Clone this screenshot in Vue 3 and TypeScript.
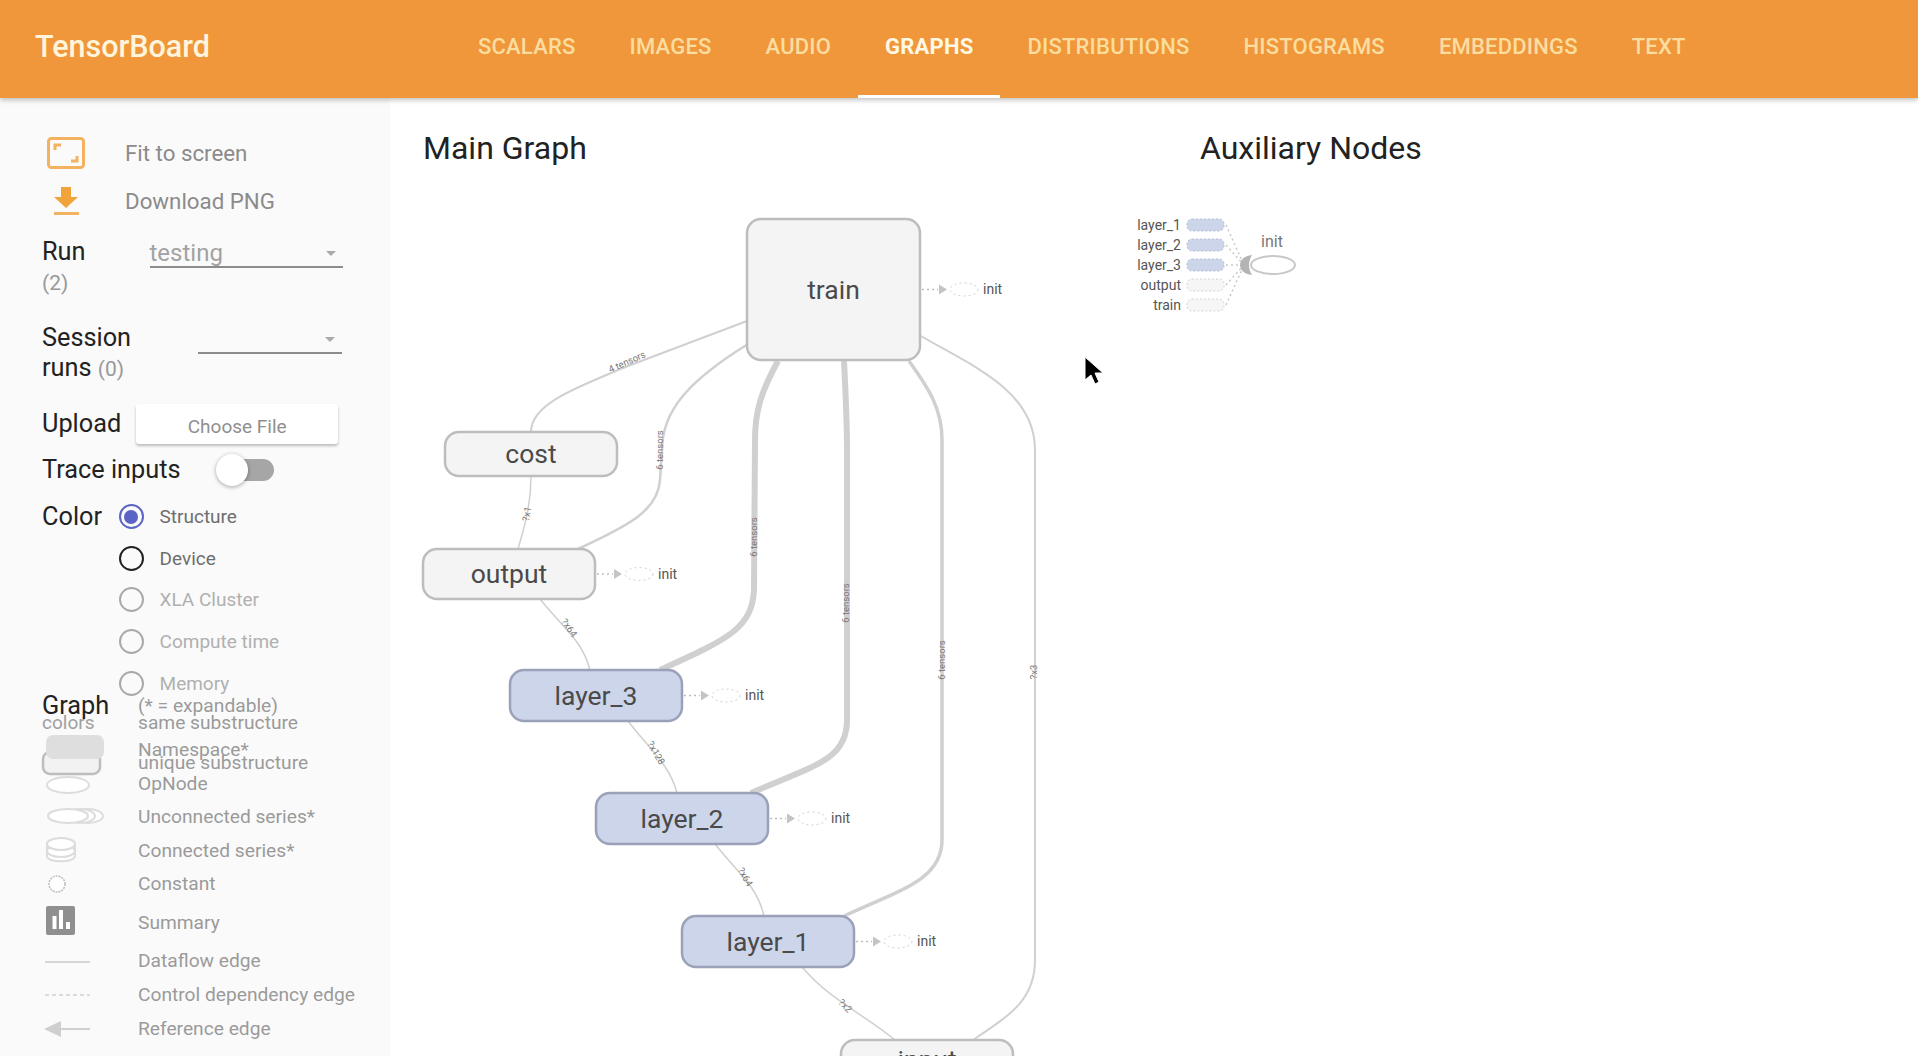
<template>
  <div class="page">
    <header class="toolbar">
      <div class="brand">TensorBoard</div>
      <nav class="tabs">
        <a v-for="tab in tabs" :key="tab" :class="['tab', { active: tab === 'GRAPHS' }]">{{ tab }}</a>
      </nav>
    </header>

    <div class="body">
      <aside class="sidebar">
        <div class="action">
          <svg class="action-icon" width="38" height="32" viewBox="0 0 38 32">
            <rect x="1.5" y="1.5" width="35" height="29" rx="3" fill="none" stroke="#f2b25f" stroke-width="3" />
            <path d="M8 13V8h6M30 19v5h-6" fill="none" stroke="#f2b25f" stroke-width="3" />
          </svg>
          <span>Fit to screen</span>
        </div>
        <div class="action download">
          <svg class="action-icon" width="38" height="32" viewBox="0 0 38 32">
            <path d="M14 2h10v10h7L19 23 7 12h7z" fill="#f2a43c" />
            <rect x="7" y="27" width="25" height="3" fill="#f2b25f" />
          </svg>
          <span>Download PNG</span>
        </div>

        <div class="field run">
          <div class="field-label">Run<br /><small>(2)</small></div>
          <div class="select run-select"><span>testing</span><i class="caret"></i></div>
        </div>

        <div class="field session">
          <div class="field-label">Session<br />runs <small>(0)</small></div>
          <div class="select session-select"><i class="caret"></i></div>
        </div>

        <div class="field upload">
          <div class="field-label">Upload</div>
          <button class="choose">Choose File</button>
        </div>

        <div class="field trace">
          <div class="field-label">Trace inputs</div>
          <div class="toggle"><i class="knob"></i></div>
        </div>

        <div class="field color">
          <div class="field-label">Color</div>
          <div class="radios">
            <div v-for="opt in colorOptions" :key="opt.label" :class="['radio', opt.state]">
              <i class="dot"></i><span>{{ opt.label }}</span>
            </div>
          </div>
        </div>

        <div class="legend">
          <div class="legend-keys">
            <div class="graph-title">Graph</div>
            <div class="graph-sub">colors</div>
            <svg class="legend-svg" width="96" height="320" viewBox="0 730 96 320">
              <rect x="1" y="752" width="57" height="22" rx="7" fill="#f2f2f2" stroke="#bdbdbd" stroke-width="2.5" />
              <rect x="4" y="735" width="58" height="24" rx="7" fill="#dedede" />
              <ellipse cx="26" cy="785" rx="21" ry="8" fill="#fff" stroke="#dcdcdc" stroke-width="2" />
              <ellipse cx="46" cy="816" rx="15" ry="7" fill="#fff" stroke="#dcdcdc" stroke-width="2" />
              <ellipse cx="38" cy="816" rx="15" ry="7" fill="#fff" stroke="#dcdcdc" stroke-width="2" />
              <ellipse cx="26" cy="816" rx="20" ry="7" fill="#fff" stroke="#dcdcdc" stroke-width="2" />
              <path d="M5 843v13c0 7 28 7 28 0v-13" fill="#fff" stroke="#dcdcdc" stroke-width="2" />
              <ellipse cx="19" cy="851" rx="14" ry="6" fill="#fff" stroke="#dcdcdc" stroke-width="2" />
              <ellipse cx="19" cy="844" rx="14" ry="6" fill="#fff" stroke="#dcdcdc" stroke-width="2" />
              <circle cx="15" cy="884" r="8" fill="#fff" stroke="#bbb" stroke-width="1.5" stroke-dasharray="2 1" />
              <rect x="4" y="906" width="29" height="29" rx="2" fill="#8f8f8f" />
              <path d="M10.500 916h4v13h-4zM17 910h4v19h-4zM24 922h4v7h-4z" fill="#fff" />
              <path d="M3 962h45" stroke="#d6d6d6" stroke-width="2" />
              <path d="M3 995h45" stroke="#cfcfcf" stroke-width="1.500" stroke-dasharray="4 3" />
              <path d="M16 1029h32" stroke="#cfcfcf" stroke-width="2" />
              <path d="M2 1029l17-8v16z" fill="#cfcfcf" />
            </svg>
          </div>
          <div class="legend-labels">
            <div v-for="row in legendRows" :key="row.label" class="legend-label" :style="{ height: row.h + 'px' }">
              {{ row.label }}
            </div>
          </div>
        </div>
      </aside>

      <main class="main">
        <div class="headings">
          <h2 class="main-graph">Main Graph</h2>
          <h2>Auxiliary Nodes</h2>
        </div>

        <!-- graph canvas, drawn in page coordinates -->
        <svg class="canvas" width="1528" height="958" viewBox="390 98 1528 958">
          <g fill="none" stroke="#d0d0d0" stroke-linecap="butt">
            <path v-for="edge in edges" :key="edge.d" :d="edge.d" :stroke-width="edge.w" />
          </g>

          <g v-for="label in edgeLabels" :key="label.text + label.x" :transform="`translate(${label.x} ${label.y}) rotate(${label.r})`">
            <text class="edge-label" text-anchor="middle" dy="3">{{ label.text }}</text>
          </g>

          <g v-for="node in nodes" :key="node.name">
            <rect
              :x="node.x"
              :y="node.y"
              :width="node.w"
              :height="node.h"
              rx="14"
              :fill="node.blue ? '#ccd5ea' : '#f4f4f4'"
              :stroke="node.blue ? '#9aa1b8' : '#bdbdbd'"
              stroke-width="2.500"
            />
            <text class="node-label" :x="node.x + node.w / 2" :y="node.y + node.h / 2 + 9" text-anchor="middle">{{ node.name }}</text>
            <g v-if="node.stub" :transform="`translate(${node.x + node.w} ${node.y + node.h / 2})`">
              <path d="M2 0h16" stroke="#bdbdbd" stroke-width="1.500" stroke-dasharray="2 3" />
              <path d="M19-5l8 5-8 5z" fill="#c4c4c4" />
              <ellipse cx="44" cy="0" rx="14" ry="6.500" fill="#fff" stroke="#cfcfcf" stroke-dasharray="2 3" />
              <text class="stub-label" x="63" y="4.500">init</text>
            </g>
          </g>

          <!-- auxiliary init node -->
          <g>
            <g v-for="(aux, i) in auxNodes" :key="aux.name">
              <text class="aux-label" x="1181" :y="225 + i * 20 + 5" text-anchor="end">{{ aux.name }}</text>
              <rect
                x="1187"
                :y="219 + i * 20"
                width="37"
                height="12"
                rx="5"
                :fill="aux.blue ? '#ccd5ea' : '#f6f6f6'"
                :stroke="aux.blue ? '#b5bdd4' : '#d4d4d4'"
                stroke-dasharray="2 2"
              />
              <path :d="`M1226 ${225 + i * 20}L1244 265`" stroke="#c8c8c8" stroke-width="1.500" stroke-dasharray="2 3" />
            </g>
            <ellipse cx="1273" cy="265" rx="22" ry="9" fill="#fff" stroke="#c8c8c8" stroke-width="2" />
            <path d="M1252 255C1244 256 1240 260 1240 265C1240 270 1244 274 1252 275C1250 272 1249 268 1249 265C1249 262 1250 258 1252 255z" fill="#b4b4b4" />
            <text class="aux-init" x="1272" y="247" text-anchor="middle">init</text>
          </g>

          <!-- mouse pointer caught in the capture -->
          <path d="M1085 357v23l6-5 4 9 4-2-4-9h8z" fill="#000" stroke="#fff" stroke-width="1" />
        </svg>
      </main>
    </div>
  </div>
</template>

<script setup lang="ts">
interface GraphNode {
  name: string
  x: number
  y: number
  w: number
  h: number
  blue?: boolean
  stub?: boolean
}

const tabs = ['SCALARS', 'IMAGES', 'AUDIO', 'GRAPHS', 'DISTRIBUTIONS', 'HISTOGRAMS', 'EMBEDDINGS', 'TEXT']

const colorOptions = [
  { label: 'Structure', state: 'selected' },
  { label: 'Device', state: 'focused' },
  { label: 'XLA Cluster', state: '' },
  { label: 'Compute time', state: '' },
  { label: 'Memory', state: '' },
]

// row heights follow the reference, which squeezes the first rows together
const legendRows = [
  { label: '(* = expandable)', h: 17 },
  { label: 'same substructure', h: 27 },
  { label: 'Namespace*', h: 13 },
  { label: 'unique substructure', h: 21 },
  { label: 'OpNode', h: 33 },
  { label: 'Unconnected series*', h: 34 },
  { label: 'Connected series*', h: 33 },
  { label: 'Constant', h: 39 },
  { label: 'Summary', h: 38 },
  { label: 'Dataflow edge', h: 34 },
  { label: 'Control dependency edge', h: 34 },
  { label: 'Reference edge', h: 34 },
]

const nodes: GraphNode[] = [
  { name: 'train', x: 747, y: 219, w: 173, h: 141, stub: true },
  { name: 'cost', x: 445, y: 432, w: 172, h: 44 },
  { name: 'output', x: 423, y: 549, w: 172, h: 50, stub: true },
  { name: 'layer_3', x: 510, y: 670, w: 172, h: 51, blue: true, stub: true },
  { name: 'layer_2', x: 596, y: 793, w: 172, h: 51, blue: true, stub: true },
  { name: 'layer_1', x: 682, y: 916, w: 172, h: 51, blue: true, stub: true },
  { name: 'input', x: 841, y: 1040, w: 172, h: 40 },
]

const edges = [
  { d: 'M747 321L628 366C570 390 531 405 531 432', w: 2 },
  { d: 'M748 344C690 380 662 410 662 450L660 480C658 510 630 525 578 549', w: 2.5 },
  { d: 'M778 361C762 390 755 410 755 440L754 590C752 630 725 640 660 670', w: 6 },
  { d: 'M844 361C846 400 847 420 847 450L847 720C847 760 815 765 751 793', w: 6 },
  { d: 'M909 361C930 390 942 410 942 440L942 840C942 880 900 890 844 916', w: 3.5 },
  { d: 'M921 336C970 365 1035 390 1035 450L1035 960C1035 1000 1010 1015 973 1040', w: 2 },
  { d: 'M531 476C531 505 525 525 518 549', w: 1.5 },
  { d: 'M540 599C565 630 582 640 590 670', w: 1.5 },
  { d: 'M628 721C650 750 670 765 677 793', w: 1.5 },
  { d: 'M715 844C735 870 757 885 764 916', w: 1.5 },
  { d: 'M802 967C830 1000 865 1015 895 1040', w: 1.5 },
]

const edgeLabels = [
  { text: '4 tensors', x: 627, y: 362, r: -24 },
  { text: '6 tensors', x: 660, y: 450, r: -90 },
  { text: '6 tensors', x: 754, y: 537, r: -90 },
  { text: '6 tensors', x: 846, y: 603, r: -90 },
  { text: '6 tensors', x: 942, y: 660, r: -90 },
  { text: '?x3', x: 1034, y: 672, r: -90 },
  { text: '?x1', x: 527, y: 514, r: -80 },
  { text: '?x64', x: 569, y: 628, r: 55 },
  { text: '?x128', x: 656, y: 753, r: 60 },
  { text: '?x64', x: 745, y: 877, r: 60 },
  { text: '?x2', x: 845, y: 1006, r: 45 },
]

const auxNodes = [
  { name: 'layer_1', blue: true },
  { name: 'layer_2', blue: true },
  { name: 'layer_3', blue: true },
  { name: 'output', blue: false },
  { name: 'train', blue: false },
]
</script>

<style>
html,
body {
  margin: 0;
  height: 100%;
  overflow: hidden;
  background: #fff;
}
</style>

<style scoped>
.page {
  width: 1918px;
  height: 1056px;
  display: flex;
  flex-direction: column;
  font-family: Roboto, "Liberation Sans", sans-serif;
  overflow: hidden;
}

.toolbar {
  height: 98px;
  flex: none;
  display: flex;
  background: #ef973a;
  box-shadow: 0 2px 5px rgba(0, 0, 0, 0.25);
  position: relative;
  z-index: 2;
}

.brand {
  width: 451px;
  box-sizing: border-box;
  padding: 28px 0 0 35px;
  font-size: 30.500px;
  font-weight: 500;
  line-height: 38px;
  color: #fff5dc;
}

.tabs {
  display: flex;
}

.tab {
  padding: 0 27px;
  height: 95px;
  line-height: 94px;
  font-size: 22px;
  letter-spacing: 0.2px;
  font-weight: 500;
  color: #fbdd9f;
  border-bottom: 3px solid transparent;
}

.tab.active {
  color: #fff8e4;
  font-weight: 700;
  border-bottom-color: #fff;
}

.body {
  flex: 1;
  display: flex;
  min-height: 0;
}

.sidebar {
  width: 390px;
  flex: none;
  box-sizing: border-box;
  padding: 39px 0 0 42px;
  background: #fafafa;
  overflow: hidden;
  color: #222;
}

.action {
  display: flex;
  align-items: center;
  height: 32px;
  font-size: 22.300px;
  color: #8b8b8b;
}

.action.download {
  margin-top: 16px;
}

.action-icon {
  width: 38px;
  margin-left: 5px;
  margin-right: 40px;
  flex: none;
}

.field {
  display: flex;
  font-size: 25.300px;
}

.field-label {
  line-height: 30px;
}

.field-label small {
  font-size: 21px;
  color: #999;
}

.run {
  margin-top: 20px;
  height: 67px;
}

.run-select {
  margin-left: 64px;
  width: 193px;
  color: #a2a2a2;
}

.session {
  margin-top: 19px;
  height: 62px;
}

.session-select {
  margin-left: 67px;
  width: 144px;
}

.select {
  height: 29px;
  border-bottom: 2px solid #8c8c8c;
  position: relative;
  line-height: 32px;
  font-size: 24px;
}

.caret {
  position: absolute;
  right: 7px;
  top: 14px;
  border: 5px solid transparent;
  border-top-color: #aaa;
  border-bottom-width: 0;
}

.upload {
  margin-top: 19px;
  height: 40px;
  align-items: center;
}

.choose {
  margin-left: 15px;
  width: 202px;
  height: 40px;
  border: 0;
  border-radius: 3px;
  background: #fff;
  box-shadow: 0 2px 3px rgba(0, 0, 0, 0.25);
  font-family: inherit;
  font-size: 19px;
  padding-top: 5px;
  color: #8f8f8f;
}

.trace {
  margin-top: 8px;
  height: 36px;
  align-items: center;
}

.toggle {
  width: 42px;
  height: 22px;
  margin-left: 51px;
  border-radius: 11px;
  background: #a6a6a6;
  position: relative;
}

.knob {
  position: absolute;
  left: -16px;
  top: -5px;
  width: 32px;
  height: 32px;
  border-radius: 50%;
  background: #fff;
  box-shadow: 0 1px 4px rgba(0, 0, 0, 0.35);
}

.color {
  margin-top: 14px;
  height: 190px;
}

.radios {
  margin-left: 16.500px;
  margin-top: 2px;
  display: flex;
  flex-direction: column;
}

.radio {
  flex: none;
  height: 41.700px;
  display: flex;
  align-items: flex-start;
  font-size: 19px;
  color: #b0b0b0;
  line-height: 26px;
}

.dot {
  width: 25px;
  height: 25px;
  box-sizing: border-box;
  border: 2.500px solid #a9a9a9;
  border-radius: 50%;
  margin-right: 16px;
  flex: none;
  position: relative;
}

.radio.selected,
.radio.focused {
  color: #6e6e6e;
}

.radio.selected .dot {
  border-color: #5a64c4;
}

.radio.selected .dot::after {
  content: "";
  position: absolute;
  inset: 3.500px;
  border-radius: 50%;
  background: #5a64c4;
}

.radio.focused .dot {
  border-color: #222;
}

.legend {
  display: flex;
}

.legend-keys {
  width: 96px;
  flex: none;
}

.graph-title {
  font-size: 25.300px;
  line-height: 28px;
  height: 20px;
  color: #222;
}

.graph-sub {
  font-size: 19px;
  line-height: 22px;
  height: 10px;
  color: #a0a0a0;
}

.legend-svg {
  display: block;
  margin-top: 8px;
  overflow: visible;
}

.legend-labels {
  display: flex;
  flex-direction: column;
  padding-top: 4px;
}

.legend-label {
  font-size: 19.200px;
  line-height: 20px;
  color: #9a9a9a;
  white-space: nowrap;
}

.main {
  flex: 1;
  position: relative;
  background: #fff;
}

.headings {
  display: flex;
  padding: 33px 0 0 33px;
}

.headings h2 {
  margin: 0;
  font-size: 32px;
  font-weight: 400;
  line-height: 34px;
  color: #222;
}

.main-graph {
  width: 777px;
}

.canvas {
  position: absolute;
  left: 0;
  top: 0;
}

.node-label {
  font-size: 26.500px;
  fill: #4a4a4a;
}

.stub-label {
  font-size: 14px;
  fill: #555;
}

.edge-label {
  font-size: 9.500px;
  fill: #777;
}

.aux-label {
  font-size: 14px;
  fill: #555;
}

.aux-init {
  font-size: 16px;
  fill: #777;
}
</style>
